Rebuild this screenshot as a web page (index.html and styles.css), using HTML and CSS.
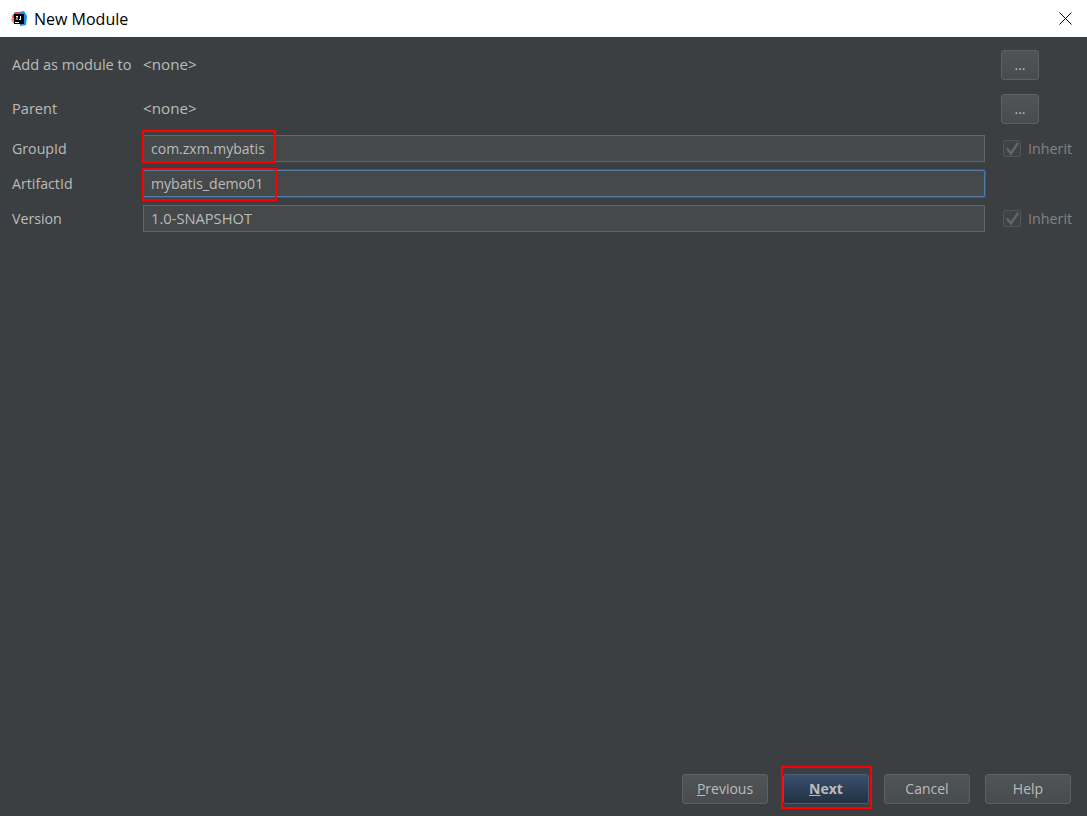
FILE: index.html
```html
<!DOCTYPE html>
<html lang="en">
<head>
  <meta charset="UTF-8">
  <meta name="viewport" content="width=device-width, initial-scale=1.0">
  <title>New Module</title>
  <link rel="stylesheet" href="styles.css">
</head>
<body>
  <div class="dialog">
    <div class="title-bar">
      <svg class="app-icon" width="16" height="16" viewBox="0 0 16 16">
        <path d="M1 5 L4 1 L9 1 L9 9 L2 9 Z" fill="#f0357e"/>
        <path d="M0 8 L4 6 L5 13 L2 12 Z" fill="#fb8a2c"/>
        <path d="M8 1 L13 0 L16 5 L15 14 L9 15 Z" fill="#1e8df0"/>
        <rect x="3" y="3" width="10" height="10" fill="#000"/>
        <rect x="4" y="11" width="4" height="1" fill="#fff"/>
        <path d="M5 5 h2 v1 h-0.5 v3 h-1 v-3 h-0.5 Z M9 5 h1 v4 h-2 v-1 h1 Z" fill="#fff"/>
      </svg>
      <span class="title-text">New Module</span>
      <svg class="close-icon" width="13" height="13" viewBox="0 0 13 13">
        <path d="M0.5 0.5 L12.5 12.5 M12.5 0.5 L0.5 12.5" stroke="#000" stroke-width="1" fill="none"/>
      </svg>
    </div>

    <div class="content">
      <div class="form">
        <div class="row row-browse">
          <label>Add as module to</label>
          <span class="value">&lt;none&gt;</span>
          <button class="btn btn-dots">...</button>
        </div>
        <div class="row row-browse row-parent">
          <label>Parent</label>
          <span class="value">&lt;none&gt;</span>
          <button class="btn btn-dots">...</button>
        </div>
        <div class="row row-field row-group">
          <label>GroupId</label>
          <div class="field">com.zxm.mybatis<span class="mark mark-group"></span></div>
          <div class="inherit"><span class="check"><svg width="14" height="14" viewBox="0 0 14 14"><path d="M2 6.5 L6 11.5 L13 1" stroke="#62666a" stroke-width="2.4" fill="none"/></svg></span>Inherit</div>
        </div>
        <div class="row row-field">
          <label>ArtifactId</label>
          <div class="field field-focus">mybatis_demo01<span class="mark mark-artifact"></span></div>
        </div>
        <div class="row row-field">
          <label>Version</label>
          <div class="field field-version">1.0-SNAPSHOT</div>
          <div class="inherit"><span class="check"><svg width="14" height="14" viewBox="0 0 14 14"><path d="M2 6.5 L6 11.5 L13 1" stroke="#62666a" stroke-width="2.4" fill="none"/></svg></span>Inherit</div>
        </div>
      </div>

      <div class="footer">
        <button class="btn"><u>P</u>revious</button>
        <button class="btn btn-primary"><u>N</u>ext<span class="mark mark-next"></span></button>
        <button class="btn">Cancel</button>
        <button class="btn">Help</button>
      </div>
    </div>
  </div>
</body>
</html>
```

FILE: styles.css
```css
html, body {
  margin: 0;
  height: 100%;
}
body {
  font-family: "Open Sans", "Noto Sans", Arial, sans-serif;
  font-size: 14px;
  color: #bbbbbb;
  background-color: #3c3f41;
  overflow: hidden;
}
.dialog {
  display: flex;
  flex-direction: column;
  height: 816px;
}
.title-bar {
  display: flex;
  align-items: center;
  height: 37px;
  flex: none;
  background: #fff;
  color: #000;
  padding-left: 11px;
  padding-right: 15px;
  font-size: 16px;
}
.app-icon {
  margin-right: 7px;
}
.close-icon {
  margin-left: auto;
}
.content {
  flex: 1;
  display: flex;
  flex-direction: column;
  padding: 13px 16px 12px 12px;
}
.form {
  display: flex;
  flex-direction: column;
}
.row {
  display: grid;
  grid-template-columns: 131px 842px 1fr;
  column-gap: 0;
  align-items: center;
}
.row-browse {
  height: 30px;
}
.row-browse label, .row-browse .value {
  padding-bottom: 2px;
}
.row-browse label {
  font-size: 14.6px;
}
.row-browse .value {
  font-size: 15.2px;
}
.row-parent {
  margin-top: 14px;
}
.row-field {
  height: 27px;
  margin-top: 8px;
}
.row-field label {
  font-size: 14.2px;
  padding-bottom: 1px;
}
.row-group {
  margin-top: 11px;
}
label {
  white-space: nowrap;
}
.field {
  position: relative;
  box-sizing: border-box;
  height: 27px;
  line-height: 25px;
  padding-left: 7px;
  background: #45494a;
  border: 1px solid #646464;
}
.field-version {
  font-size: 14.7px;
}
.field-focus {
  font-size: 14.1px;
  border: 1px solid #4f7aa5;
  border-radius: 2px;
  box-shadow: 0 0 0 1px #395a7d;
}
.mark {
  position: absolute;
  box-sizing: border-box;
  border: 2px solid #ff0000;
  pointer-events: none;
}
.mark-group {
  left: -2px;
  top: -6px;
  width: 134px;
  height: 33px;
}
.mark-artifact {
  left: -2px;
  top: -3px;
  width: 135px;
  height: 33px;
}
.mark-next {
  left: -3px;
  top: -9px;
  width: 91px;
  height: 43px;
}
.btn {
  position: relative;
  box-sizing: border-box;
  width: 86px;
  height: 30px;
  padding: 0 0 2px;
  font-family: inherit;
  font-size: 14px;
  color: #bbbbbb;
  background: linear-gradient(#505455, #484c4e);
  border: 1px solid #5e6162;
  border-radius: 3px;
}
.btn-dots {
  width: 38px;
  margin-left: 16px;
  padding: 0;
  line-height: 20px;
}
.btn-primary {
  font-weight: bold;
  background: linear-gradient(#384f6b, #233143);
  border-color: #4c5e74;
}
.inherit {
  display: flex;
  align-items: center;
  margin-left: 18px;
  color: #828282;
  font-size: 14.3px;
}
.check {
  display: flex;
  align-items: center;
  justify-content: center;
  box-sizing: border-box;
  width: 18px;
  height: 17px;
  margin-right: 7px;
  border: 1px solid #535557;
  border-radius: 2px;
  background: #3f4345;
}
.footer {
  display: flex;
  justify-content: flex-end;
  gap: 15px;
  margin-top: auto;
}
```
